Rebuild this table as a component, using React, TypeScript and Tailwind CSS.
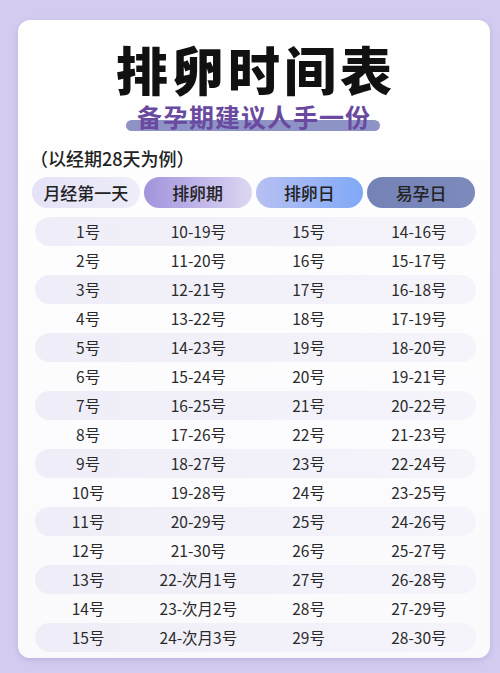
import React from "react";

const rows: [string, string, string, string][] = [
  ["1号", "10-19号", "15号", "14-16号"],
  ["2号", "11-20号", "16号", "15-17号"],
  ["3号", "12-21号", "17号", "16-18号"],
  ["4号", "13-22号", "18号", "17-19号"],
  ["5号", "14-23号", "19号", "18-20号"],
  ["6号", "15-24号", "20号", "19-21号"],
  ["7号", "16-25号", "21号", "20-22号"],
  ["8号", "17-26号", "22号", "21-23号"],
  ["9号", "18-27号", "23号", "22-24号"],
  ["10号", "19-28号", "24号", "23-25号"],
  ["11号", "20-29号", "25号", "24-26号"],
  ["12号", "21-30号", "26号", "25-27号"],
  ["13号", "22-次月1号", "27号", "26-28号"],
  ["14号", "23-次月2号", "28号", "27-29号"],
  ["15号", "24-次月3号", "29号", "28-30号"],
];

const font = { fontFamily: '"Noto Sans CJK SC", "Noto Sans", sans-serif' };

export default function App() {
  return (
    <div className="w-[500px] h-[673px] bg-[#d4ccf0] pt-[20px] pl-[18px] overflow-hidden" style={font}>
      <div className="w-[472px] h-[638px] rounded-[12px] bg-gradient-to-b from-white to-[#fafafd] shadow-[0_2px_6px_rgba(120,100,180,0.25)] pt-[24px] px-[14px] flex flex-col items-center">
        <div className="text-[52px] leading-[50px] h-[50px] font-black text-[#111] tracking-[4px] pl-[4px]">排卵时间表</div>
        <div className="relative mt-[10px] h-[25px] flex items-center justify-center">
          <div className="absolute left-[-11px] right-[-9px] top-[16px] h-[11px] rounded-full bg-[#8e93c6]" />
          <div className="relative text-[25px] leading-[25px] font-bold text-[#6a4aa0] tracking-[1px]">备孕期建议人手一份</div>
        </div>
        <div className="self-start mt-[20px] ml-[-2px] text-[18px] leading-[18px] font-medium text-[#222]">（以经期28天为例）</div>
        <div className="w-full mt-[10px] grid grid-cols-4 gap-[4px] pr-[1px]">
          <div className="h-[31px] rounded-full bg-gradient-to-r from-[#e4e2f6] to-[#eeedf9] flex items-center justify-center text-[17px] font-medium text-[#222]">月经第一天</div>
          <div className="h-[31px] rounded-full bg-gradient-to-r from-[#a393dc] to-[#ddd7f2] flex items-center justify-center text-[17px] font-medium text-[#222]">排卵期</div>
          <div className="h-[31px] rounded-full bg-gradient-to-r from-[#b7c0f2] to-[#80a9f6] flex items-center justify-center text-[17px] font-medium text-[#222]">排卵日</div>
          <div className="h-[31px] rounded-full bg-gradient-to-r from-[#7582b6] to-[#7c8abc] flex items-center justify-center text-[17px] font-medium text-[#222]">易孕日</div>
        </div>
        <div className="w-full mt-[9px] pl-[3px] flex flex-col">
          {rows.map((r, i) => (
            <div
              key={i}
              className={
                i % 2 === 0
                  ? "h-[29px] grid grid-cols-4 items-center rounded-full bg-gradient-to-r from-[#efeef8] to-[#f5f4fb] text-[15.5px] text-[#2a2a2a]"
                  : "h-[29px] grid grid-cols-4 items-center rounded-full text-[15.5px] text-[#2a2a2a]"
              }
            >
              <div className="text-center pr-[4px]">{r[0]}</div>
              <div className="text-center pr-[4px]">{r[1]}</div>
              <div className="text-center pr-[4px]">{r[2]}</div>
              <div className="text-center pr-[4px]">{r[3]}</div>
            </div>
          ))}
        </div>
      </div>
    </div>
  );
}
